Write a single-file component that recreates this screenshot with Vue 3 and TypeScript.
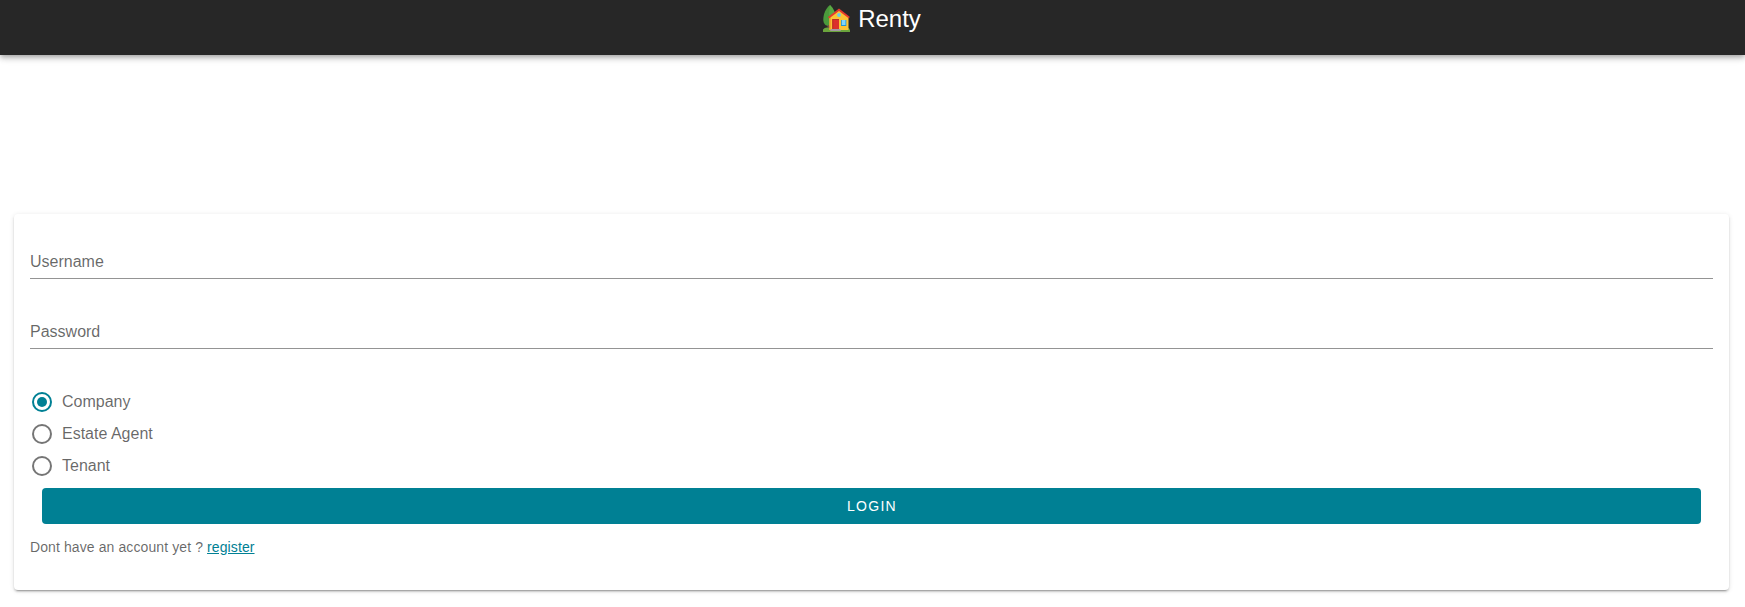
<script setup lang="ts">
import { ref } from 'vue'

const roles: string[] = ['Company', 'Estate Agent', 'Tenant']
const role = ref('Company')
const fields = [
  { label: 'Username', type: 'text' },
  { label: 'Password', type: 'password' },
]
</script>

<template>
  <div class="app">
    <header class="bar">
      <div class="title">
        <svg class="logo" viewBox="0 0 27 27">
          <path d="M7 0C3 3 0.300 9 0.300 14.500C0.300 19 3 21 5.500 21H10V4Z" fill="#4b9a3b" />
          <path d="M7 0C10 3 12 6 12.500 10L8 18L6 9Z" fill="#5aa843" />
          <rect x="4.500" y="20" width="2" height="4" fill="#795046" />
          <path d="M0 27V24.500Q1.500 22.500 4 22.500L8 23.500H22L24 22.500Q26.500 22.500 27 25V27Z" fill="#6ba53c" />
          <path d="M6.500 12L16 5L25.500 12V25H6.500Z" fill="#fcc436" />
          <path d="M6.500 12V25H8V12Z" fill="#f6a52c" />
          <path d="M16 3.500L26.700 11.800L26 13.500L16 5.900L6 13.500L5 12Z" fill="#e53a2c" />
          <rect x="9.300" y="14" width="6.700" height="10" fill="#dc302c" />
          <path d="M9.300 14h6.700v1H10.300v9h-1Z" fill="#b92d24" />
          <rect x="18.300" y="15" width="4.700" height="5.500" fill="#81d4fa" />
          <path d="M18 15h.8v5h3.700v-5h.8v6H18Z" fill="#2196d3" />
          <circle cx="16" cy="10" r="1.900" fill="#69c9e9" />
          <path d="M8 24h9l1 2H7Z" fill="#a29aa0" />
        </svg>
        <span class="brand">Renty</span>
      </div>
    </header>
    <main class="card">
      <label v-for="f in fields" :key="f.label" class="field">
        <input :type="f.type" :placeholder="f.label" />
      </label>
      <div class="roles">
        <div v-for="r in roles" :key="r" class="role" @click="role = r">
          <svg class="radio" :class="{ on: role === r }" viewBox="0 0 24 24">
            <circle cx="12" cy="12" r="9" fill="none" stroke="currentColor" stroke-width="2" />
            <circle v-if="role === r" cx="12" cy="12" r="5" fill="currentColor" />
          </svg>
          <span>{{ r }}</span>
        </div>
      </div>
      <button class="login">Login</button>
      <p class="hint">Dont have an account yet ? <a href="#">register</a></p>
    </main>
  </div>
</template>

<style>
body { margin: 0; background: #fff; overflow: hidden; }
</style>

<style scoped>
.app { font-family: "Liberation Sans", Arial, sans-serif; height: 607px; box-sizing: border-box; }
.bar { height: 55px; background: #272727; color: #fff; display: flex; justify-content: center; box-shadow: 0 2px 4px -1px rgba(0,0,0,.2), 0 4px 5px rgba(0,0,0,.14), 0 1px 10px rgba(0,0,0,.12); }
.title { display: flex; align-items: flex-start; font-size: 24px; line-height: 38px; margin-right: 1px; }
.logo { width: 27px; height: 27px; margin: 5px 8px 0 0; }
.card { margin: 159px 16px 0 14px; height: 376px; box-sizing: border-box; padding: 28px 16px 0; border-radius: 4px; background: #fff; box-shadow: 0 3px 1px -2px rgba(0,0,0,.2), 0 2px 2px rgba(0,0,0,.14), 0 1px 5px rgba(0,0,0,.12); }
.field { display: block; height: 70px; }
.field input { display: block; width: 100%; height: 37px; box-sizing: border-box; border: 0; border-bottom: 1px solid #949494; outline: 0; padding: 4px 0 0; font: 16px "Liberation Sans", Arial, sans-serif; background: transparent; }
.field input::placeholder { color: rgba(0,0,0,.6); opacity: 1; }
.roles { padding: 8px 0 2px; }
.role { display: flex; align-items: center; height: 24px; margin-bottom: 8px; font-size: 16px; color: rgba(0,0,0,.6); }
.radio { width: 24px; height: 24px; margin-right: 8px; color: rgba(0,0,0,.54); }
.radio.on { color: #008094; }
.login { display: block; width: calc(100% - 24px); height: 36px; margin: 0 12px; border: 0; border-radius: 4px; background: #008094; color: #fff; font: 14px "Liberation Sans", Arial, sans-serif; letter-spacing: 1.25px; text-transform: uppercase; padding: 0 0 0 1px; }
.hint { margin: 12px 0 0; font-size: 14px; line-height: 22px; letter-spacing: .1px; color: rgba(0,0,0,.6); }
.hint a { color: #008094; }
</style>
